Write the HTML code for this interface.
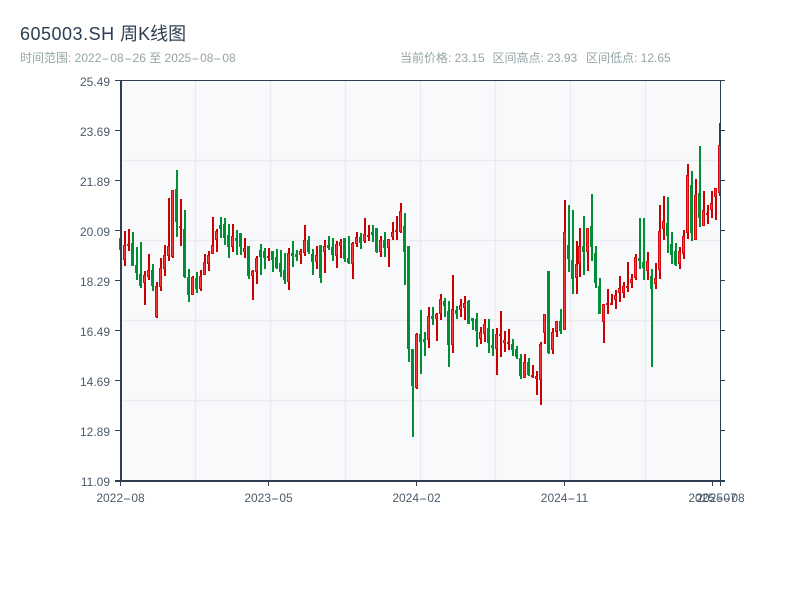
<!DOCTYPE html>
<html lang="zh">
<head>
<meta charset="utf-8">
<title>605003.SH 周K线图</title>
<style>
html,body{margin:0;padding:0;background:#fff;width:800px;height:600px;overflow:hidden}
body{position:relative;font-family:"Liberation Sans","Noto Sans CJK SC",sans-serif}
.t{position:absolute;white-space:nowrap}
#title{left:20px;top:23px;font-size:18px;line-height:22px;color:#2c3e50}
#title span{letter-spacing:.5px}
.sub{top:50px;font-size:12px;line-height:16px;color:#95a5a6}
.yl{right:690px;font-size:12px;line-height:14px;color:#2c3e50;opacity:.85}
.xl{top:491px;font-size:12px;line-height:14px;color:#2c3e50;opacity:.85;transform:translateX(-50%)}
.h{display:inline-block;width:8.3px;text-align:center;transform:scaleX(2)}
.sub .h{width:8.9px}
svg{position:absolute;left:0;top:0}
</style>
</head>
<body>
<div id="title" class="t"><span>605003.SH </span>周K线图</div>
<div class="t sub" style="left:20px">时间范围: 2022<span class="h">-</span>08<span class="h">-</span>26 至 2025<span class="h">-</span>08<span class="h">-</span>08</div>
<div class="t sub" style="left:400px">当前价格: 23.15</div>
<div class="t sub" style="left:492.5px">区间高点: 23.93</div>
<div class="t sub" style="left:586px">区间低点: 12.65</div>

<svg id="c" width="800" height="600" viewBox="0 0 800 600" shape-rendering="crispEdges">
<rect x="121" y="81" width="599" height="400" fill="#f8f9fb"/>
<path shape-rendering="auto" d="M195.5 81V481M270.5 81V481M345.5 81V481M420.5 81V481M495.5 81V481M570.5 81V481M645.5 81V481M121 160.5H720M121 240.5H720M121 320.5H720M121 400.5H720" stroke="#e9ebf0" stroke-width="1.4" fill="none"/>
<g id="candles"></g>
<path d="M115 80.5H725M115 130.5H121M115 180.5H121M115 230.5H121M115 280.5H121M115 330.5H121M115 380.5H121M115 430.5H121M115 480.5H121M720 130.5H725M720 180.5H725M720 230.5H725M720 280.5H725M720 330.5H725M720 380.5H725M720 430.5H725M720.5 81V481" stroke="#2c3e50" stroke-width="1" fill="none"/>
<rect x="120" y="80" width="2" height="402" fill="#2c3e50"/>
<rect x="115" y="480" width="610" height="2" fill="#2c3e50"/>
<path d="M120.5 482V486M268.5 482V486M416.5 482V486M564.5 482V486M712.5 482V486M720.5 482V486" stroke="#2c3e50" stroke-width="1" fill="none"/>
</svg>

<div class="t yl" style="top:75px">25.49</div>
<div class="t yl" style="top:125px">23.69</div>
<div class="t yl" style="top:175px">21.89</div>
<div class="t yl" style="top:225px">20.09</div>
<div class="t yl" style="top:275px">18.29</div>
<div class="t yl" style="top:325px">16.49</div>
<div class="t yl" style="top:375px">14.69</div>
<div class="t yl" style="top:425px">12.89</div>
<div class="t yl" style="top:475px">11.09</div>
<div class="t xl" style="left:120.5px">2022<span class="h">-</span>08</div>
<div class="t xl" style="left:268.5px">2023<span class="h">-</span>05</div>
<div class="t xl" style="left:416.5px">2024<span class="h">-</span>02</div>
<div class="t xl" style="left:564.5px">2024<span class="h">-</span>11</div>
<div class="t xl" style="left:712.5px">2025<span class="h">-</span>07</div>
<div class="t xl" style="left:720.5px">2025<span class="h">-</span>08</div>

<script>
var G='g',R='r';
var segs=[
[160,[
[0,G,222,285,234,270],[1,R,213,318,255,300],[2,R,207,273,252,258],[3,G,216,318,250,318],[4,G,261,360,315,340],[5,G,246,384,342,378],[6,R,333,435,345,369],[7,R,282,360,330,351],[8,G,312,393,330,378],[9,R,366,474,378,471],[10,R,294,393,324,381],[11,R,255,348,285,327],[12,R,114,303,258,288],[13,R,90,294,90,291],[14,G,30,231,87,186],[15,R,117,258,198,204],[16,G,150,354,207,351],[17,G,327,426,351,405],[18,R,348,405,351,405],[19,G,336,399,354,387],[20,R,330,393,348,387],[21,R,282,345,306,345],[22,R,273,333,285,312],[23,R,171,282,255,282],[24,R,207,276,213,240],[25,G,171,234,195,207],[26,G,174,255,192,234],[27,G,192,294,225,261],[28,R,192,276,228,261],[29,G,210,285,234,243],[30,G,219,285,219,261],[31,R,234,294,264,276],[32,G,258,357,258,348],[33,R,330,420,333,348],[34,R,288,372,294,336]]],
[200,[
[35,G,132,225,150,170],[36,G,144,207,153,174],[37,R,144,183,168,174],[38,G,153,216,153,180],[39,G,147,207,171,204],[40,G,150,231,189,216],[41,G,159,252,210,240],[42,R,144,270,159,246],[43,G,123,201,159,168],[44,G,150,183,162,171],[45,R,147,192,153,165],[46,R,75,168,120,159],[47,G,108,162,120,156],[48,G,147,225,162,186],[49,R,138,207,165,186],[50,G,135,249,135,234],[51,R,120,219,138,156],[52,G,108,150,135,144],[53,G,114,183,141,165],[54,R,123,204,132,168],[55,R,117,174,126,138],[56,G,114,186,114,177],[57,G,108,192,174,189],[58,R,126,237,129,192],[59,R,96,141,111,132],[60,G,99,147,111,129],[61,R,54,129,102,123],[62,R,75,123,105,111],[63,G,75,126,96,105],[64,G,84,159,84,156],[65,R,108,171,120,156],[66,G,96,171,120,144],[67,R,117,201,117,144],[68,R,66,120,96,111],[69,R,48,120,90,96],[70,R,9,99,33,96],[71,G,39,255,78,156]]],
[260,[
[72,G,-42,306,-42,267],[73,G,267,531,267,378],[74,R,219,387,222,384],[75,G,150,342,222,246],[76,G,216,288,237,246],[77,R,141,264,168,240],[78,G,141,195,168,177],[79,R,159,243,162,177],[80,R,102,180,117,162],[81,G,114,171,123,138],[82,G,123,321,153,255],[83,R,45,279,147,255],[84,G,138,177,150,162],[85,R,117,171,135,150],[86,R,108,180,129,144],[87,G,120,192,123,192],[88,G,174,210,174,183],[89,G,159,261,177,213],[90,R,201,252,216,237],[91,R,177,246,192,222],[92,G,177,279,204,249],[93,G,207,288,255,264],[94,R,204,345,222,267],[95,R,153,291,222,228],[96,R,213,276,240,249],[97,R,207,270,246,252],[98,G,237,288,252,270],[99,G,258,297,267,291],[100,G,282,357,294,348],[101,R,282,354,306,354],[102,G,294,348,306,345],[103,R,315,354,345,351],[104,R,333,405,349,357],[105,R,246,435,252,360]]],
[180,[
[106,R,402,492,402,459],[107,G,273,522,273,519],[108,R,444,522,456,510],[109,R,423,471,423,456],[110,G,387,462,423,453],[111,R,60,450,156,450],[112,G,75,276,195,237],[113,G,90,342,240,297],[114,R,183,342,252,294],[115,R,144,291,198,252],[116,G,108,285,198,216],[117,R,144,273,144,216],[118,G,42,243,138,201],[119,G,198,324,219,309],[120,G,294,402,318,402],[121,R,372,489,372,426],[122,R,327,402,369,375],[123,R,342,375,369,375],[124,R,330,387,345,360],[125,R,288,366,324,339],[126,R,306,354,318,339],[127,R,246,336,318,324],[128,R,282,324,297,309],[129,R,222,300,231,294],[130,G,114,267,234,243],[131,G,114,300,246,264],[132,R,216,300,243,273],[133,G,267,561,288,327],[134,R,249,327,294,312]]],
[70,[
[135,R,405,627,483,600],[136,R,378,510,453,477],[137,G,381,549,459,498],[138,G,486,582,522,555],[139,G,519,588,543,585],[140,R,531,597,543,582],[141,R,480,567,498,552],[142,R,282,507,315,489],[143,G,303,513,345,489],[144,R,327,510,375,510],[145,G,228,471,369,444],[146,R,363,468,420,468],[147,R,405,462,429,435],[148,R,363,444,399,420],[149,R,354,450,354,381],[150,R,159,378,225,369]]]
];
var s='';
segs.forEach(function(sg){
  var y0=sg[0];
  sg[1].forEach(function(d){
    var cx=Math.round(120.3+3.993*d[0]);
    var wt=Math.round(y0+d[2]/3),wb=Math.round(y0+d[3]/3),bt=Math.round(y0+d[4]/3),bb=Math.round(y0+d[5]/3);
    if(d[1]===G){
      s+='<rect x="'+cx+'" y="'+wt+'" width="2" height="'+(wb-wt)+'" fill="#008f35"/>';
      s+='<rect x="'+(cx-1)+'" y="'+bt+'" width="3" height="'+Math.max(bb-bt,1)+'" fill="#008f35"/>';
    }else{
      s+='<rect x="'+cx+'" y="'+wt+'" width="2" height="'+(wb-wt)+'" fill="#cc0000"/>';
      var h=Math.max(bb-bt,2);
      s+='<rect x="'+(cx-1)+'" y="'+bt+'" width="3" height="'+h+'" fill="#d40a10"/>';
      if(h>2)s+='<rect x="'+cx+'" y="'+(bt+1)+'" width="1" height="'+(h-2)+'" fill="#ff3a3a"/>';
    }
  });
});
document.getElementById('candles').innerHTML=s;
</script>
</body>
</html>
